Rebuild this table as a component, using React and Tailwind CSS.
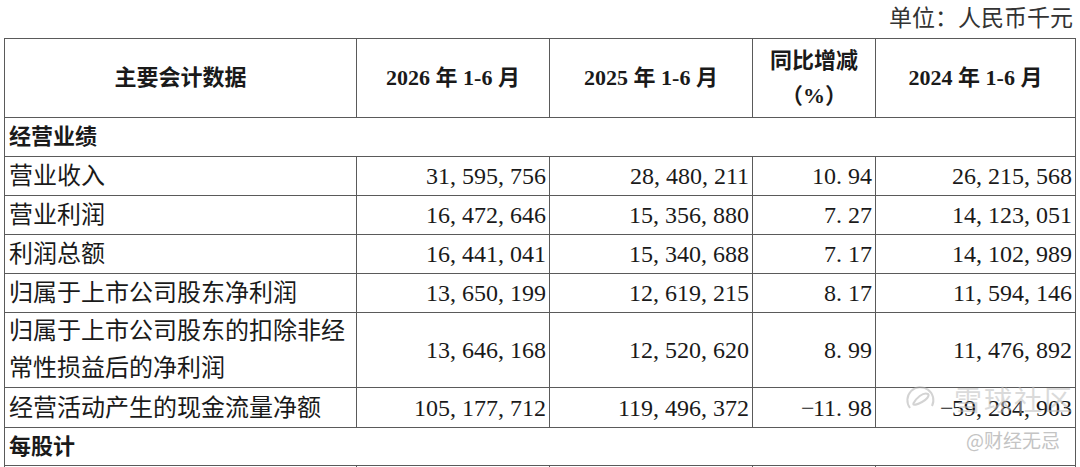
import React from 'react';

const rows = [
  { label: '营业收入', a: '31,595,756', b: '28,480,211', c: '10.94', d: '26,215,568' },
  { label: '营业利润', a: '16,472,646', b: '15,356,880', c: '7.27', d: '14,123,051' },
  { label: '利润总额', a: '16,441,041', b: '15,340,688', c: '7.17', d: '14,102,989' },
  { label: '归属于上市公司股东净利润', a: '13,650,199', b: '12,619,215', c: '8.17', d: '11,594,146' },
];

// SimSun-like half-width punctuation: commas, dots and minus take a full digit cell
const Num = ({ value }) => (
  <span className="whitespace-nowrap">
    {value.split('').map((ch, i) =>
      ch === ',' || ch === '.' || ch === '-' ? (
        <span key={i} className="inline-block w-[12px] text-left">{ch === '-' ? '−' : ch}</span>
      ) : (
        <span key={i}>{ch}</span>
      )
    )}
  </span>
);

const cell = 'border-[1.5px] border-[#5a5a5a] p-0';

const DataRow = ({ label, a, b, c, d, tall, h }) => (
  <tr className={h}>
    <td className={`${cell} pl-[4px] align-middle ${tall ? 'leading-[37px]' : ''}`}>{label}</td>
    <td className={`${cell} pr-[3px] text-right`}><Num value={a} /></td>
    <td className={`${cell} pr-[3px] text-right`}><Num value={b} /></td>
    <td className={`${cell} pr-[3px] text-right`}><Num value={c} /></td>
    <td className={`${cell} pr-[3px] text-right`}><Num value={d} /></td>
  </tr>
);

export default function App() {
  return (
    <div className="relative w-[1080px] h-[467px] overflow-hidden bg-white text-[#1a1a1a] font-['Liberation_Serif','Noto_Sans_CJK_SC',serif]">
      <div className="flex h-[38px] items-center justify-end pr-[7px] text-[23px] text-[#333]">
        单位：人民币千元
      </div>

      <div className="pl-[4px]">
        <table className="table-fixed border-collapse w-[1071px] text-[24px] leading-none">
          <colgroup>
            <col className="w-[352px]" />
            <col className="w-[193px]" />
            <col className="w-[203px]" />
            <col className="w-[123px]" />
            <col className="w-[200px]" />
          </colgroup>
          <tbody>
            <tr className="h-[79px] text-[22px] font-bold">
              <td className={`${cell} text-center`}>主要会计数据</td>
              <td className={`${cell} text-center`}>2026 年 1-6 月</td>
              <td className={`${cell} text-center`}>2025 年 1-6 月</td>
              <td className={`${cell} text-center leading-[35px]`}>
                同比增减<br />（%）
              </td>
              <td className={`${cell} text-center`}>2024 年 1-6 月</td>
            </tr>
            <tr className="h-[39px]">
              <td colSpan={5} className={`${cell} pl-[4px] text-[22px] font-bold`}>经营业绩</td>
            </tr>
            {rows.map((r) => (
              <DataRow key={r.label} {...r} h="h-[39px]" />
            ))}
            <DataRow
              h="h-[74px]"
              tall
              label={<>归属于上市公司股东的扣除非经<br />常性损益后的净利润</>}
              a="13,646,168"
              b="12,520,620"
              c="8.99"
              d="11,476,892"
            />
            <DataRow
              h="h-[40px]"
              label="经营活动产生的现金流量净额"
              a="105,177,712"
              b="119,496,372"
              c="-11.98"
              d="-59,284,903"
            />
            <tr className="h-[38px]">
              <td colSpan={5} className={`${cell} pl-[4px] text-[22px] font-bold`}>每股计</td>
            </tr>
            <tr className="h-[30px]">
              <td className={cell}></td>
              <td className={cell}></td>
              <td className={cell}></td>
              <td className={cell}></td>
              <td className={cell}></td>
            </tr>
          </tbody>
        </table>
      </div>

      {/* watermark overlay */}
      <div className="pointer-events-none absolute left-[904px] top-[384px] flex items-center gap-[16px] whitespace-nowrap opacity-55">
        <svg width="34" height="30" viewBox="0 0 34 30" fill="none" stroke="#b0b0b0" strokeWidth="2">
          <path d="M6 24 A13 13 0 1 1 28 22" />
          <path d="M9 20 c3 -6 10 -12 15 -10 c2 2 -2 6 -6 8 c-4 2 -8 4 -9 2" />
        </svg>
        <span className="text-[28px] tracking-[2px] leading-none text-[#bdbdbd] font-['Noto_Sans_CJK_SC',sans-serif]">雪球社区</span>
      </div>
      <div className="pointer-events-none absolute left-[966px] top-[430px] whitespace-nowrap text-[19px] leading-none text-[#c4c4c4] font-['Noto_Sans_CJK_SC',sans-serif]">
        @财经无忌
      </div>
    </div>
  );
}
